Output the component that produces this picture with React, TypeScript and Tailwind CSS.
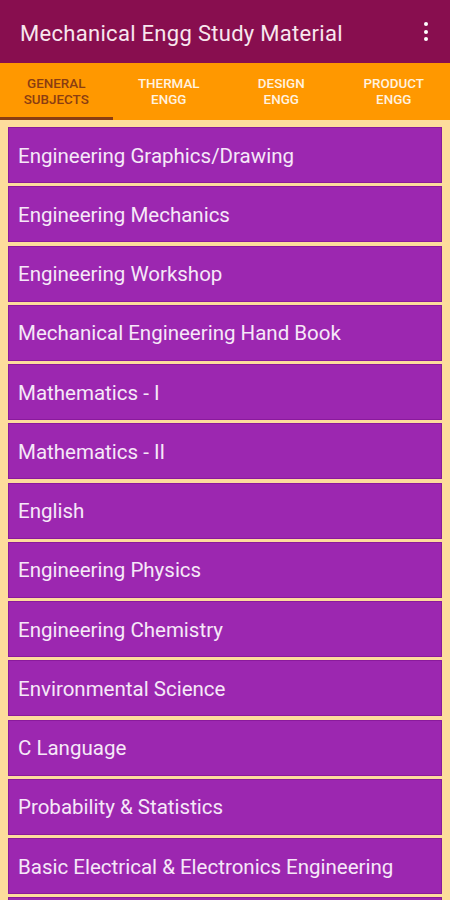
import { useState } from "react";

const tabs = [
  ["GENERAL", "SUBJECTS"],
  ["THERMAL", "ENGG"],
  ["DESIGN", "ENGG"],
  ["PRODUCT", "ENGG"],
];

const subjects = [
  "Engineering Graphics/Drawing",
  "Engineering Mechanics",
  "Engineering Workshop",
  "Mechanical Engineering Hand Book",
  "Mathematics - I",
  "Mathematics - II",
  "English",
  "Engineering Physics",
  "Engineering Chemistry",
  "Environmental Science",
  "C Language",
  "Probability & Statistics",
  "Basic Electrical & Electronics Engineering",
];

export default function App() {
  const [active, setActive] = useState(0);

  return (
    <div className="w-[450px] h-[900px] overflow-hidden bg-[#fddc9c] font-['Roboto',sans-serif]">
      {/* App bar */}
      <header className="h-[63px] bg-[#880e4f] flex items-center justify-between pl-5 pr-[22px]">
        <h1 className="text-[22px] text-[#f8e6ee] tracking-[0.3px] pt-[4px]">
          Mechanical Engg Study Material
        </h1>
        <div className="flex flex-col gap-[3.5px]">
          <span className="w-[4px] h-[4px] rounded-full bg-white" />
          <span className="w-[4px] h-[4px] rounded-full bg-white" />
          <span className="w-[4px] h-[4px] rounded-full bg-white" />
        </div>
      </header>

      {/* Tabs */}
      <nav className="h-[57px] bg-[#ff9800] grid grid-cols-4">
        {tabs.map((t, i) => (
          <button
            key={t[0]}
            onClick={() => setActive(i)}
            className={
              "relative flex flex-col items-center justify-center text-[13.4px] leading-[16px] font-medium pt-[1px] " +
              (i === active ? "text-[#8a3d12]" : "text-[#fff3e0]")
            }
          >
            <span>{t[0]}</span>
            <span>{t[1]}</span>
            {i === active && (
              <span className="absolute left-0 right-0 bottom-0 h-[3px] bg-[#8a3d12]" />
            )}
          </button>
        ))}
      </nav>

      {/* Subject list */}
      <ul className="flex flex-col gap-[3.25px] pl-2 pr-2 pt-[7px]">
        {subjects.map((s) => (
          <li
            key={s}
            className="h-[56px] shrink-0 flex items-center pl-[9px] pt-[2px] bg-[#9c27b0] border border-[#8a1a9c] text-[20.5px] text-[#f6e8f8]"
          >
            {s}
          </li>
        ))}
        <li className="h-[56px] shrink-0 bg-[#9c27b0] border border-[#8a1a9c]" />
      </ul>
    </div>
  );
}
